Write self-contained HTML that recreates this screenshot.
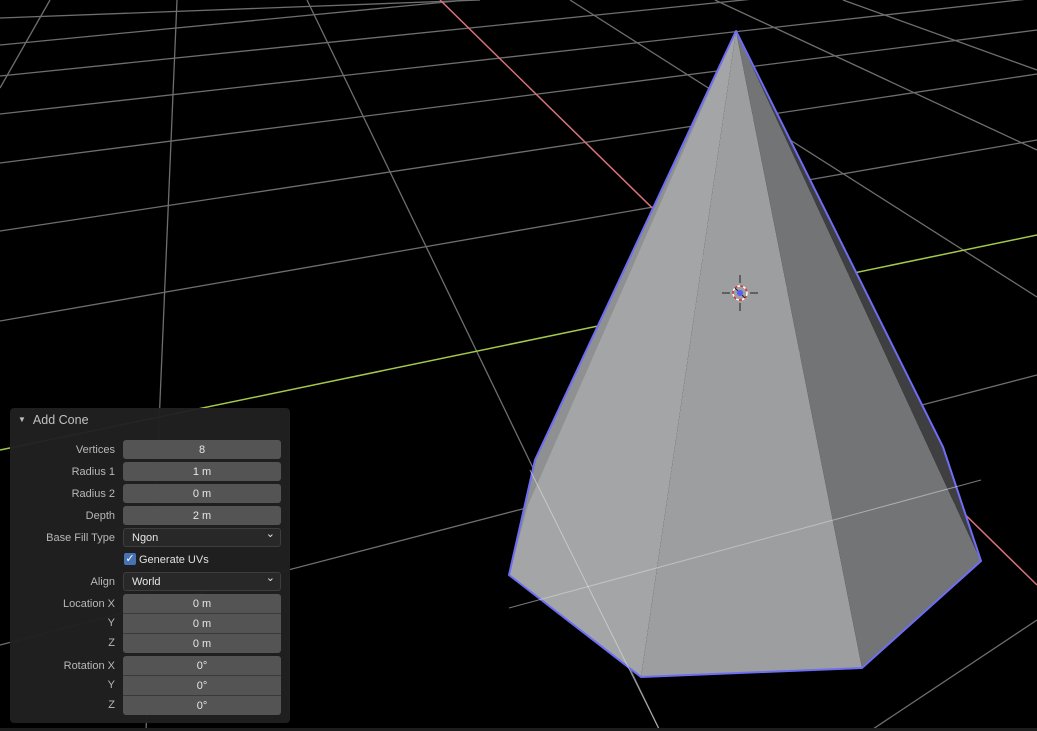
<!DOCTYPE html>
<html><head><meta charset="utf-8"><style>
body{margin:0;width:1037px;height:731px;overflow:hidden;background:#000;font-family:"Liberation Sans",sans-serif;position:relative}
svg{position:absolute;left:0;top:0}
.panel{position:absolute;left:10px;top:408px;width:280px;height:315px;background:rgba(32,32,32,0.97);border-radius:4px}
.hdr{position:absolute;left:8px;top:5px;color:#c0c0c0;font-size:12.5px}
.hdr span{font-size:8px;margin-right:7px;position:relative;top:-2px}
.lab{position:absolute;right:175px;width:110px;text-align:right;color:#b8b8b8;font-size:11px;line-height:20px}
.f{position:absolute;left:113px;width:158px;height:19px;background:#545454;border-radius:3px;color:#e6e6e6;font-size:11px;line-height:20px;text-align:center;box-sizing:border-box}
.dd{background:#282828;border:1px solid #3e3e3e;text-align:left;padding-left:8px;line-height:18px}
.dd:after{content:"⌄";position:absolute;right:5px;top:-4px;font-size:11px}
.g{border-radius:0;border-bottom:1px solid #3a3a3a}
</style></head><body>
<svg width="1037" height="731" viewBox="0 0 1037 731">
<g stroke="#6e6e6e" stroke-width="1.3" fill="none">
<line x1="0" y1="18" x2="480" y2="0"/>
<line x1="0" y1="45" x2="1037" y2="-55"/>
<line x1="0" y1="76" x2="1037" y2="-30"/>
<line x1="0" y1="114" x2="1037" y2="-2"/>
<line x1="0" y1="163" x2="1037" y2="30"/>
<line x1="0" y1="231" x2="1037" y2="74"/>
<line x1="0" y1="321" x2="1037" y2="140"/>
<line x1="0" y1="645" x2="1037" y2="375"/>
<line x1="870" y1="731" x2="1037" y2="620"/>
<line x1="177" y1="0" x2="146" y2="731"/>
<line x1="307" y1="0" x2="660" y2="731"/>
<line x1="50" y1="0" x2="0" y2="88"/>
<line x1="570" y1="0" x2="1037" y2="297"/>
<line x1="715" y1="0" x2="1037" y2="150"/>
<line x1="843" y1="0" x2="1037" y2="70"/>
</g>
<line x1="440" y1="0" x2="1037" y2="585" stroke="#d9737a" stroke-width="1.5"/>
<line x1="0" y1="450" x2="1037" y2="235" stroke="#a3c94a" stroke-width="1.5"/>
<polygon points="736,31 535,460 509,575 641,677" fill="#a3a5a6"/>
<polygon points="736,31 535,460 509,575 528,505" fill="#8e9091"/>
<polygon points="736,31 641,677 862,668" fill="#9c9e9f"/>
<polygon points="736,31 862,668 981,561" fill="#737475"/>
<polygon points="736,31 943,447 981,561 962,520" fill="#3f3f42"/>
<polygon points="736,31 535,460 509,575 641,677 862,668 981,561 943,447" fill="none" stroke="#6d6df5" stroke-width="2" stroke-linejoin="round"/>
<line x1="509" y1="608" x2="981" y2="480" stroke="#dcdcdc" stroke-width="1" opacity="0.55"/>
<line x1="530" y1="470" x2="660" y2="731" stroke="#e0e0e0" stroke-width="1" opacity="0.6"/>
<g transform="translate(740,293)">
<circle r="7" fill="none" stroke="#fff" stroke-width="1.5" stroke-dasharray="3 3"/>
<circle r="7" fill="none" stroke="#e03030" stroke-width="1.5" stroke-dasharray="3 3" stroke-dashoffset="3"/>
<g stroke="#222" stroke-width="1"><line x1="-18" y1="0" x2="-10" y2="0"/><line x1="10" y1="0" x2="18" y2="0"/><line x1="0" y1="-18" x2="0" y2="-10"/><line x1="0" y1="10" x2="0" y2="18"/><line x1="-5" y1="-5" x2="5" y2="5"/></g>
<circle r="3" fill="#5a5aff"/>
</g>
<rect x="0" y="728" width="1037" height="3" fill="#1d1d1d"/>
</svg>
<div class="panel">
<div class="hdr"><span>▼</span>Add Cone</div>
<div class="lab" style="top:32px">Vertices</div><div class="f" style="top:32px">8</div>
<div class="lab" style="top:54px">Radius 1</div><div class="f" style="top:54px">1 m</div>
<div class="lab" style="top:76px">Radius 2</div><div class="f" style="top:76px">0 m</div>
<div class="lab" style="top:98px">Depth</div><div class="f" style="top:98px">2 m</div>
<div class="lab" style="top:120px">Base Fill Type</div><div class="f dd" style="top:120px">Ngon</div>
<div style="position:absolute;left:114px;top:145px;width:12px;height:12px;background:#4772b3;border-radius:2px;color:#fff;font-size:11px;line-height:12px;text-align:center">✓</div>
<div style="position:absolute;left:129px;top:142px;color:#e0e0e0;font-size:11px;line-height:20px">Generate UVs</div>
<div class="lab" style="top:164px">Align</div><div class="f dd" style="top:164px">World</div>
<div class="lab" style="top:186px">Location X</div><div class="f g" style="top:186px;border-radius:3px 3px 0 0;height:20px">0 m</div>
<div class="lab" style="top:205px">Y</div><div class="f g" style="top:206px;height:20px">0 m</div>
<div class="lab" style="top:225px">Z</div><div class="f" style="top:226px;border-radius:0 0 3px 3px">0 m</div>
<div class="lab" style="top:248px">Rotation X</div><div class="f g" style="top:248px;border-radius:3px 3px 0 0;height:20px">0°</div>
<div class="lab" style="top:267px">Y</div><div class="f g" style="top:268px;height:20px">0°</div>
<div class="lab" style="top:287px">Z</div><div class="f" style="top:288px;border-radius:0 0 3px 3px">0°</div>
</div>
</body></html>
